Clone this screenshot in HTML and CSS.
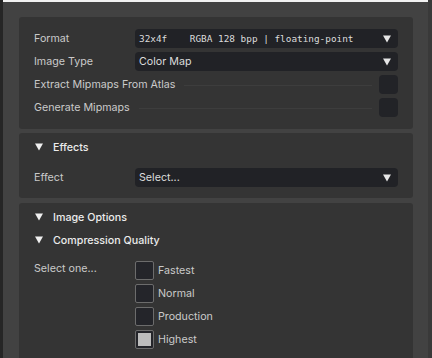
FILE: index.html
```html
<!DOCTYPE html>
<html lang="en">
<head>
  <meta charset="UTF-8">
  <title>Texture Import</title>
  <meta name="viewport" content="width=device-width, initial-scale=1.0">
  <link rel="stylesheet" href="styles.css">
</head>
<body>
  <div class="window">
    <div class="edge-left"></div>
    <div class="main">
      <!-- Основные настройки -->
      <div class="panel panel-main">
        <div class="row">
          <label>Format</label>
          <div class="select mono"><span>32x4f&nbsp;&nbsp;&nbsp;&nbsp;RGBA 128 bpp | floating-point</span><svg class="arrow" width="8" height="8" viewBox="0 0 8 8"><polygon points="0,0.5 8,0.5 4,7.5" fill="#e6e6e6"/></svg></div>
        </div>
        <div class="row">
          <label>Image Type</label>
          <div class="select"><span>Color Map</span><svg class="arrow" width="8" height="8" viewBox="0 0 8 8"><polygon points="0,0.5 8,0.5 4,7.5" fill="#e6e6e6"/></svg></div>
        </div>
        <div class="row check-row">
          <label>Extract Mipmaps From Atlas</label>
          <div class="dots"></div>
          <div class="toggle"></div>
        </div>
        <div class="row check-row">
          <label>Generate Mipmaps</label>
          <div class="dots"></div>
          <div class="toggle"></div>
        </div>
      </div>

      <!-- Effects -->
      <div class="panel panel-effects">
        <div class="section-head"><svg width="8" height="8" viewBox="0 0 8 8"><polygon points="0,0.5 8,0.5 4,7.5" fill="#f0f0f0"/></svg>Effects</div>
        <div class="row">
          <label>Effect</label>
          <div class="select"><span>Select...</span><svg class="arrow" width="8" height="8" viewBox="0 0 8 8"><polygon points="0,0.5 8,0.5 4,7.5" fill="#e6e6e6"/></svg></div>
        </div>
      </div>

      <!-- Image Options -->
      <div class="panel panel-options">
        <div class="section-head"><svg width="8" height="8" viewBox="0 0 8 8"><polygon points="0,0.5 8,0.5 4,7.5" fill="#f0f0f0"/></svg>Image Options</div>
        <div class="section-head"><svg width="8" height="8" viewBox="0 0 8 8"><polygon points="0,0.5 8,0.5 4,7.5" fill="#f0f0f0"/></svg>Compression Quality</div>
        <div class="choice">
          <label>Select one...</label>
          <div class="options">
            <div class="option"><span class="box"></span>Fastest</div>
            <div class="option"><span class="box"></span>Normal</div>
            <div class="option"><span class="box"></span>Production</div>
            <div class="option"><span class="box checked"></span>Highest</div>
          </div>
        </div>
      </div>
    </div>
    <div class="edge-right"></div>
  </div>
</body>
</html>
```
FILE: styles.css
```css
body { background: #424242; color: #cacaca; font-family: 'Inter', 'Roboto', Arial, sans-serif; font-size: 10.7px; margin: 0; padding: 0; }
.window { display: flex; height: 358px; overflow: hidden; }
.edge-left { width: 3px; background: #262626; flex: none; }
.edge-right { width: 4px; background: #393939; flex: none; }
.main { flex: 1; border-top: 2px solid #f2f2f2; padding: 15px 15px 0 16px; display: flex; flex-direction: column; gap: 4px; }
.panel { background: #343434; border-radius: 3px; padding: 12px 15px; }
.panel-main { display: flex; flex-direction: column; gap: 4px; }
.panel-effects { padding: 4px 15px 11px; }
.panel-effects .row { margin-top: 11px; }
.panel-options { padding: 4px 15px 20px; margin-top: 1px; flex: 1; }
.panel-options .section-head + .section-head { margin-top: 3px; }
.row { display: flex; align-items: center; height: 19px; }
.row label { width: 101px; flex: none; }
.select { flex: 1; height: 19px; background: #212226; border-radius: 4px; display: flex; align-items: center; justify-content: space-between; padding: 0 7px 0 4px; color: #dcdcdc; }
.select.mono span { font-family: 'DejaVu Sans Mono', 'Liberation Mono', monospace; font-size: 9.4px; white-space: pre; }
.arrow { flex: none; }
.check-row label { width: auto; }
.dots { flex: 1; height: 1px; background: #3d3d3d; margin: 1px 7px 0 9px; }
.toggle { width: 19px; height: 19px; background: #222327; border-radius: 4px; flex: none; }
.section-head { height: 20px; display: flex; align-items: center; color: #ececec; font-weight: 500; }
.section-head svg { margin: 0 10px 0 1px; }
.choice { display: flex; margin-top: 11px; }
.choice label { width: 101px; flex: none; padding-top: 1px; }
.options { display: flex; flex-direction: column; gap: 4px; }
.option { display: flex; align-items: center; height: 19px; color: #cacaca; }
.box { width: 17px; height: 17px; border: 1px solid #6c6c6c; border-radius: 2px; background: #24252a; margin-right: 4px; box-sizing: content-box; position: relative; }
.box.checked::after { content: ''; position: absolute; left: 2px; top: 2px; width: 13px; height: 13px; background: #bdbdbd; }
```
